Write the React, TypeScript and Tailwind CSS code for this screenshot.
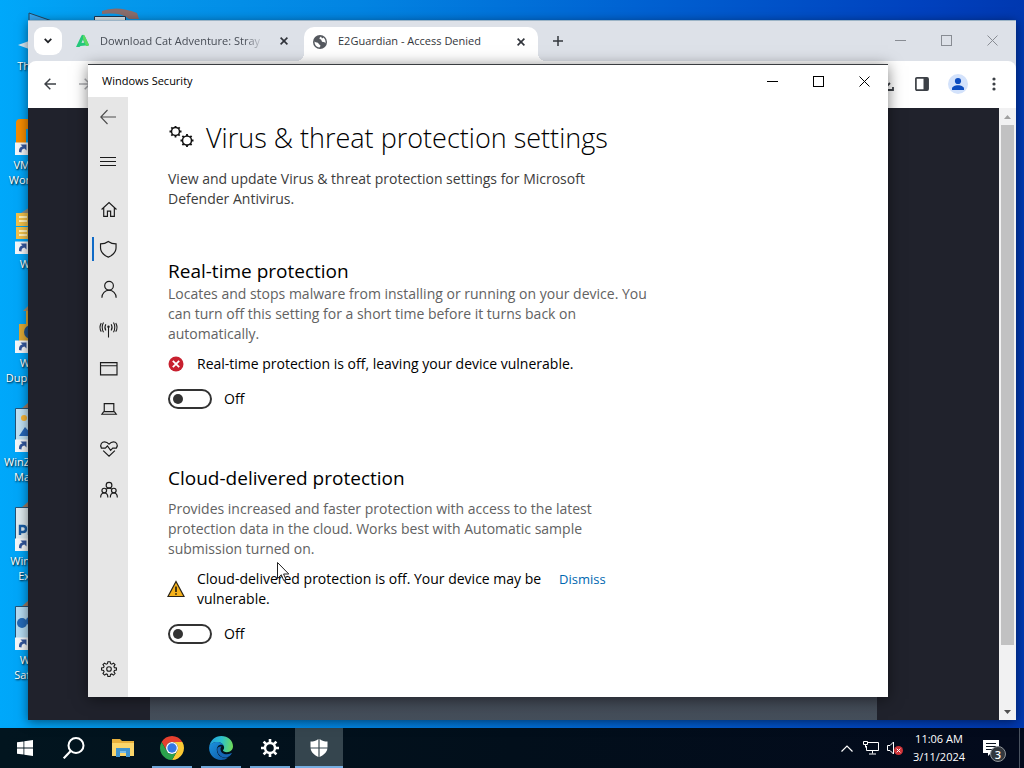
import React from "react";

type IconProps = { className?: string; children: React.ReactNode };

/* 16px line icon with crisp one-pixel strokes */
function Line({ className = "size-4", children }: IconProps) {
  return (
    <svg viewBox="0 0 16 16" className={className} fill="none" stroke="currentColor" strokeWidth="1.1" aria-hidden="true">
      {children}
    </svg>
  );
}

const GEAR =
  "M6.9 .7h2.2l.4 2 1.3.55 1.7-1.15 1.55 1.55-1.15 1.7.55 1.3 2 .4v2.1l-2 .4-.55 1.3 1.15 1.7-1.55 1.55-1.7-1.15-1.3.55-.4 2H6.9l-.4-2-1.3-.55-1.7 1.15L1.95 12.5l1.15-1.7-.55-1.3-2-.4V7l2-.4.55-1.3-1.15-1.7L3.5 2.1l1.7 1.15 1.3-.55z";

function WindowButtons({ tone }: { tone: string }) {
  return (
    <div className={`flex ${tone}`}>
      <button aria-label="Minimize" className="flex h-8 w-[46px] items-center justify-center pr-px">
        <svg viewBox="0 0 11 11" className="size-[11px]" shapeRendering="crispEdges" aria-hidden="true">
          <path d="M0 5.5h11" stroke="currentColor" />
        </svg>
      </button>
      <button aria-label="Maximize" className="flex h-8 w-[46px] items-center justify-center pr-px">
        <svg viewBox="0 0 11 11" className="size-[11px]" fill="none" shapeRendering="crispEdges" aria-hidden="true">
          <path d="M.5.5h10v10H.5z" stroke="currentColor" />
        </svg>
      </button>
      <button aria-label="Close" className="flex h-8 w-[46px] items-center justify-center pr-px">
        <svg viewBox="0 0 11 11" className="size-[11px]" aria-hidden="true">
          <path d="M.5.5l10 10M10.5.5l-10 10" stroke="currentColor" />
        </svg>
      </button>
    </div>
  );
}

/* ---------- Desktop shortcuts ---------- */

const shortcuts: { lines: string[]; art: React.ReactNode }[] = [
  {
    lines: ["Th"],
    art: (
      <>
        <path d="M14 1l26 9H14z" fill="#3aa6ee" stroke="#23455f" />
        <path d="M3 33l11-4v8z" fill="#d5e8f4" />
      </>
    ),
  },
  { lines: ["VM", "Wor"], art: <path d="M1 38V12q0-4 4-4h30v10H11v20z" fill="#f38b00" /> },
  {
    lines: ["W"],
    art: (
      <>
        <path d="M6 3l12-8v8z" fill="#8d8f86" />
        <path d="M1 3h30v13H1zM1 17h30v12H1z" fill="#f0c04a" />
        <path d="M4 7h8M4 11h8M4 21h8M4 25h8" stroke="#fff0b8" strokeWidth="2" />
      </>
    ),
  },
  {
    lines: ["W", "Dupl"],
    art: (
      <>
        <path d="M8 2l8-8v8z" fill="#a98a68" />
        <path d="M4 15h7V2h20v30H4z" fill="#dca733" />
        <circle cx="16" cy="23" r="7" fill="#245184" />
      </>
    ),
  },
  {
    lines: ["WinZ", "Ma"],
    art: (
      <>
        <path d="M6 1l8-7v7z" fill="#9b7b65" />
        <path d="M.5.5h30v42H.5z" fill="#bfe0f2" stroke="#245276" />
        <circle cx="9" cy="10" r="3" fill="#f5b436" />
        <path d="M4 28l6-9 8 9z" fill="#2567b8" />
      </>
    ),
  },
  {
    lines: ["Win", "Ex"],
    art: (
      <>
        <path d="M6 1l8-7v7z" fill="#9b7b65" />
        <path d="M.5.5h30v42H.5z" fill="#dde9ee" stroke="#245276" />
        <path d="M5 28V19h3q3 0 3 3t-3 3H5M14 28V18" fill="none" stroke="#185ba2" strokeWidth="2.4" />
      </>
    ),
  },
  {
    lines: ["W", "Saf"],
    art: (
      <>
        <path d="M6 1l8-7v7z" fill="#9b7b65" />
        <path d="M.5.5h30v42H.5z" fill="#b4daf0" stroke="#245276" />
        <circle cx="7" cy="17" r="5" fill="#2469b6" />
        <circle cx="15" cy="15" r="4" fill="#2469b6" />
      </>
    ),
  },
];

function Desktop() {
  return (
    <>
      <ul className="absolute top-3 left-0 w-[30px]">
        {shortcuts.map((s, i) => (
          <li key={i} className="flex h-[99px] flex-col">
            <svg viewBox="0 0 14 46" className="ml-[15px] h-[46px] w-[14px] shrink-0 overflow-visible" aria-hidden="true">
              {s.art}
              {i > 0 && (
                <>
                  <path d="M0 31.5h13V44H0z" fill="#f4f6f8" />
                  <path d="M4 41c0-4 1-5 3.5-5.5L5.500 33.500h6v6l-2-2C7 38 6.500 39 6.500 41.500z" fill="#33569c" />
                </>
              )}
            </svg>
            {s.lines.map((l) => (
              <span key={l} className="text-right text-[11px] leading-[15px] whitespace-nowrap text-white [text-shadow:1px_1px_2px_#000]">
                {l}
              </span>
            ))}
          </li>
        ))}
      </ul>
      <svg viewBox="0 0 50 14" className="absolute top-[7px] left-[93px] h-[14px] w-[50px]" aria-hidden="true">
        <path d="M9 4Q24-2 44 6l2 6H36q-8-7-27-5z" fill="#8a6d6c" />
        <path d="M1.5 9.500h31V14h-31z" fill="#d8e4ea" stroke="#1d3550" />
      </svg>
    </>
  );
}

/* ---------- Browser ---------- */

function TabClose({ label }: { label: string }) {
  return (
    <button aria-label={label} className="flex size-4 items-center justify-center">
      <svg viewBox="0 0 8 8" className="size-2" aria-hidden="true">
        <path d="M.6.6l6.8 6.8M7.4.6L.6 7.4" stroke="#30333a" strokeWidth="1.6" />
      </svg>
    </button>
  );
}

function Browser() {
  return (
    <section
      aria-label="Browser"
      className="absolute top-5 right-2 bottom-2 left-7 flex flex-col border-t border-[#9cb4c6] bg-[#dde1e8] shadow-[0_2px_10px_rgba(0,0,0,0.5)]"
    >
      <div className="flex h-10 shrink-0 pl-[6px]">
        <button aria-label="Search tabs" className="mt-[6px] flex size-7 items-center justify-center rounded-[9px] bg-white">
          <svg viewBox="0 0 8 6" className="h-[6px] w-2" fill="none" aria-hidden="true">
            <path d="M.7.9L4 4.200 7.300.9" stroke="#1f2125" strokeWidth="1.7" />
          </svg>
        </button>
        <div className="ml-[14px] flex h-10 w-[216px] items-center">
          <svg viewBox="0 0 14 14" className="size-[14px] shrink-0" aria-hidden="true">
            <path d="M0 13L5.5 1.500Q7 0 8.500 1.500L13 11q-2 2-4 0L7 5.500 5.500 9l3-.5 1 3-5 .5L3.500 13z" fill="#23c77a" />
            <path d="M7 1Q8 .8 8.800 2L13 11q-1 1.500-3 .8L7 5z" fill="#5ada62" />
          </svg>
          <span className="ml-[10px] w-[164px] shrink-0 text-[11px] whitespace-nowrap text-[#474c55] [mask-image:linear-gradient(to_right,#000_88%,transparent)]">
            Download Cat Adventure: Stray
          </span>
          <span className="ml-3 flex">
            <TabClose label="Close Download Cat Adventure" />
          </span>
        </div>
        <div className="relative mt-[6px] ml-3 flex h-[34px] w-[234px] items-center rounded-t-[10px] bg-white px-[9px] pb-[5px] before:absolute before:bottom-0 before:-left-2 before:size-2 before:bg-[radial-gradient(circle_at_0_0,transparent_8px,#fff_8px)] after:absolute after:-right-2 after:bottom-0 after:size-2 after:bg-[radial-gradient(circle_at_100%_0,transparent_8px,#fff_8px)]">
          <svg viewBox="0 0 14 14" className="size-[14px] shrink-0" aria-hidden="true">
            <circle cx="7" cy="7" r="7" fill="#54585e" />
            <path
              d="M1.5 6.500C3 8 5 7 5.500 8.500s2 1 2 2.500L6.500 12.600C3 12 1.500 9.500 1.500 6.500zM8 1.500q-2 1-1.500 2.500 2 0 2 1.500t2 1.500 2 1.500Q13 4.500 10.500 2.500L9 3.500z"
              fill="#fff"
            />
          </svg>
          <span className="ml-[11px] flex-1 text-[11px] whitespace-nowrap text-[#33363b]">E2Guardian - Access Denied</span>
          <TabClose label="Close E2Guardian" />
        </div>
        <button aria-label="New tab" className="ml-3 flex h-10 w-4 items-center justify-center text-[#33373d]">
          <svg viewBox="0 0 10 10" className="size-[10px]" aria-hidden="true">
            <path d="M5 0v10M0 5h10" stroke="currentColor" strokeWidth="1.5" />
          </svg>
        </button>
        <div className="ml-auto pt-[3px]">
          <WindowButtons tone="text-[#888c93]" />
        </div>
      </div>
      <div className="flex h-[47px] shrink-0 items-center rounded-t-lg bg-white px-2 pb-px text-[#3c4046]">
        <button aria-label="Back" className="flex size-7 items-center justify-center">
          <svg viewBox="0 0 12 12" className="size-3" fill="none" stroke="currentColor" strokeWidth="1.5" aria-hidden="true">
            <path d="M12 6H1M6.3.7L1 6l5.300 5.300" />
          </svg>
        </button>
        <button aria-label="Forward" className="ml-[7px] flex size-7 items-center justify-center text-[#a9abaf]">
          <svg viewBox="0 0 12 12" className="size-3" fill="none" stroke="currentColor" strokeWidth="1.5" aria-hidden="true">
            <path d="M0 6h11M5.7.7L11 6l-5.300 5.300" />
          </svg>
        </button>
        <div className="ml-auto flex gap-2">
          <button aria-label="Downloads" className="flex size-7 items-center justify-center">
            <svg viewBox="0 0 16 16" className="size-4" fill="none" stroke="currentColor" strokeWidth="1.8" aria-hidden="true">
              <path d="M8 2v9M4 7l4 4 4-4M4 11v3h11v-3" />
            </svg>
          </button>
          <button aria-label="Side panel" className="flex size-7 items-center justify-center">
            <svg viewBox="0 0 14 14" className="size-[14px]" aria-hidden="true">
              <rect x=".9" y=".9" width="12.2" height="12.2" rx="1" fill="none" stroke="currentColor" strokeWidth="1.7" />
              <path d="M8.5 1H13v12H8.500z" fill="currentColor" />
            </svg>
          </button>
          <button aria-label="Profile" className="flex size-7 items-center justify-center">
            <svg viewBox="0 0 20 20" className="size-5" aria-hidden="true">
              <circle cx="10" cy="10" r="10" fill="#d3e2fb" />
              <circle cx="10" cy="7" r="3.1" fill="#0d4dc0" />
              <path d="M4 16v-1.5c0-2 3-3.300 6-3.300s6 1.300 6 3.300V16z" fill="#0d4dc0" />
            </svg>
          </button>
          <button aria-label="Menu" className="flex size-7 items-center justify-center">
            <svg viewBox="0 0 4 14" className="h-[14px] w-1" fill="currentColor" aria-hidden="true">
              <circle cx="2" cy="2" r="1.6" />
              <circle cx="2" cy="7" r="1.6" />
              <circle cx="2" cy="12" r="1.6" />
            </svg>
          </button>
        </div>
      </div>
      <div className="flex min-h-0 flex-1">
        <div className="flex flex-1 items-end bg-[#20222c] px-[122px]">
          <div className="h-14 w-full bg-gradient-to-b from-[#3b3c48] to-[#454f5b]" />
        </div>
        <div className="flex w-[17px] flex-col items-center bg-[#f1f1f2]">
          <button aria-label="Scroll up" className="flex h-[17px] items-center">
            <svg viewBox="0 0 7 4" className="h-1 w-[7px]" aria-hidden="true">
              <path d="M0 4L3.5 0 7 4z" fill="#a0a0a0" />
            </svg>
          </button>
          <div className="w-[13px] flex-[520_1_0%] bg-[#c1c1c2]" />
          <div className="flex-[58_1_0%]" />
          <button aria-label="Scroll down" className="flex h-[17px] items-center">
            <svg viewBox="0 0 7 4" className="h-1 w-[7px]" aria-hidden="true">
              <path d="M0 0h7L3.5 4z" fill="#4f4f50" />
            </svg>
          </button>
        </div>
      </div>
    </section>
  );
}

/* ---------- Windows Security ---------- */

const navItems: { label: string; icon: React.ReactNode }[] = [
  { label: "Home", icon: <path d="M1.5 8L8.500 1.500 15.500 8M3.500 6.500v8h3.500V9.500h3v5h3.500v-8" /> },
  {
    label: "Virus & threat protection",
    icon: <path d="M7.8.4C9.800 1.900 12.300 2.700 15.100 2.700v4c0 4-3.300 6.800-7.300 8.500C3.800 13.500.5 10.700.5 6.700V2.700C3.300 2.700 5.800 1.900 7.800.4z" />,
  },
  {
    label: "Account protection",
    icon: (
      <>
        <circle cx="8.5" cy="4.5" r="4.1" />
        <path d="M1.8 15.700C1.800 11.500 4.800 8.700 8.500 8.700s6.700 2.800 6.700 7" />
      </>
    ),
  },
  {
    label: "Firewall & network protection",
    icon: (
      <>
        <path
          strokeWidth="1"
          d="M8 6V15.500M5.500 9q-1.800-3 0-6M10.500 9q1.800-3 0-6M3.300 10.500q-2.500-4.500 0-9M12.700 10.500q2.500-4.500 0-9M1.200 10q-2.500-4 0-8M14.800 10q2.500-4 0-8"
        />
        <circle cx="8" cy="5.500" r=".6" />
      </>
    ),
  },
  { label: "App & browser control", icon: <path d="M.5 1.500h15.500v11.500H.5zM.5 4.500H16" /> },
  { label: "Device security", icon: <path d="M4 2.500h9v7.500H4zM3.500 10L1.800 12.500h13.500L13.500 10" /> },
  {
    label: "Device performance & health",
    icon: (
      <path d="M1.3 6.500C-.5 3 2 .8 4.300.8 6.500.8 7.500 1.800 8.500 3 9.500 1.800 10.500.8 12.700.8 15 .8 17.500 3 15.500 6.500M3 9l5.500 5.300L14 9M.8 6.700h4.200l2-2 3 4.100 2-2.100h3.800" />
    ),
  },
  {
    label: "Family options",
    icon: (
      <>
        <circle cx="8.5" cy="4" r="2.700" />
        <circle cx="4" cy="9" r="2.200" />
        <circle cx="13" cy="9" r="2.200" />
        <path d="M.6 15.500c0-2.500 1.300-4.200 3.400-4.200s3.400 1.700 3.400 4.200M9.700 15.500c0-2.500 1.300-4.200 3.300-4.200s3.300 1.700 3.300 4.200M6 7.500q2.500-1.500 5 0" />
      </>
    ),
  },
];

function Toggle({ label }: { label: string }) {
  return (
    <label className="mt-[15px] flex h-5 w-max items-center gap-3 text-sm leading-5 text-black">
      <input
        type="checkbox"
        role="switch"
        aria-label={label}
        className="flex h-5 w-11 appearance-none items-center rounded-full border-2 border-[#333] bg-white pl-[3px] before:size-[10px] before:rounded-full before:bg-[#333] before:content-['']"
      />
      Off
    </label>
  );
}

function SecurityWindow() {
  return (
    <section
      aria-label="Windows Security"
      className="absolute top-16 right-[136px] bottom-[31px] left-[88px] flex flex-col border-t border-[#3a3d41] bg-white shadow-[0_2px_14px_rgba(0,0,0,0.5)]"
    >
      <header className="flex h-8 shrink-0 items-center justify-between pl-[14px] text-black">
        <span className="pt-px text-[11px]">Windows Security</span>
        <WindowButtons tone="text-black" />
      </header>
      <div className="flex min-h-0 flex-1">
        <nav className="flex w-10 shrink-0 flex-col bg-[#e6e6e6] text-[#1b1b1b]">
          <button aria-label="Back" className="flex size-10 items-center justify-center text-[#4c4c4c]">
            <Line>
              <path d="M16 8H.8M7.5 1L.8 8l6.700 7" />
            </Line>
          </button>
          <button aria-label="Open navigation" className="mt-1 mb-2 flex size-10 items-center justify-center">
            <Line>
              <path d="M0 4.500h16M0 8.500h16M0 12.500h16" shapeRendering="crispEdges" />
            </Line>
          </button>
          {navItems.map((n, i) => (
            <button key={n.label} aria-label={n.label} className="flex h-10 w-full items-center">
              <span className={i === 1 ? "ml-1 h-6 w-[2px] bg-[#0f6ac6]" : "ml-1 h-6 w-[2px]"} />
              <Line className="ml-[6px] size-[17px] overflow-visible">{n.icon}</Line>
            </button>
          ))}
          <button aria-label="Settings" className="mt-auto mb-2 flex size-10 items-center justify-center pl-[2px]">
            <Line>
              <path d={GEAR} />
              <circle cx="8" cy="8" r="2.3" />
            </Line>
          </button>
        </nav>
        <main className="min-w-0 flex-1 overflow-hidden pt-[21px] pl-10 text-sm leading-5">
          <h1 className="flex h-10 items-center text-[27px] font-light text-black">
            <svg viewBox="0 0 26 24" className="mr-3 h-6 w-[26px]" fill="none" stroke="#111" strokeWidth="1.5" aria-hidden="true">
              <circle cx="7.5" cy="5.500" r="4" />
              <circle cx="19" cy="14.5" r="4.500" />
              <path
                strokeWidth="1.8"
                d="M7.5 1.500v-2M7.500 11.500v-2M3.500 5.500h-2M13.500 5.500h-2M4.700 2.700L3.300 1.300M11.700 9.700l-1.400-1.400M4.700 8.300l-1.400 1.400M11.700 1.300l-1.400 1.400M19 10V8M19 21v-2M14.500 14.500h-2M25.500 14.500h-2M15.800 11.300l-1.400-1.400M23.600 19.100l-1.400-1.400M15.800 17.700l-1.400 1.400M23.600 9.900l-1.400 1.400"
              />
            </svg>
            Virus &amp; threat protection settings
          </h1>
          <p className="mt-[11px] max-w-[460px] text-[#3c3c3c]">
            View and update Virus &amp; threat protection settings for Microsoft Defender Antivirus.
          </p>

          <section className="mt-[49px] max-w-[492px]">
            <h2 className="text-[19px] leading-[26px] text-black">Real-time protection</h2>
            <p className="text-[#626262]">
              Locates and stops malware from installing or running on your device. You can turn off this setting for a short time before it turns back on automatically.
            </p>
            <div className="mt-[10px] flex items-center text-black">
              <svg viewBox="0 0 16 16" className="mr-[13px] size-4" aria-hidden="true">
                <circle cx="8" cy="8" r="7.5" fill="#c8202f" />
                <path d="M4.8 4.800l6.400 6.400M11.200 4.800l-6.400 6.400" stroke="#fff" strokeWidth="1.8" />
              </svg>
              Real-time protection is off, leaving your device vulnerable.
            </div>
            <Toggle label="Real-time protection" />
          </section>

          <section className="mt-14 max-w-[492px]">
            <h2 className="text-[19px] leading-[26px] text-black">Cloud-delivered protection</h2>
            <p className="mt-2 max-w-[440px] text-[#626262]">
              Provides increased and faster protection with access to the latest protection data in the cloud. Works best with Automatic sample submission turned on.
            </p>
            <div className="mt-[10px] flex items-center text-black">
              <svg viewBox="0 0 16 16" className="mr-[13px] size-4 shrink-0 overflow-visible" aria-hidden="true">
                <path d="M8 .5L16 15.500H0z" fill="#f6b21b" stroke="#2b2418" strokeWidth="1.2" />
                <path d="M8 5.500v5.500M8 12.300v1.500" stroke="#111" strokeWidth="1.5" />
              </svg>
              <p className="w-[362px]">Cloud-delivered protection is off. Your device may be vulnerable.</p>
              <a href="#dismiss" className="self-start text-[13px] text-[#0067b0]">
                Dismiss
              </a>
            </div>
            <Toggle label="Cloud-delivered protection" />
          </section>
        </main>
      </div>
    </section>
  );
}

/* ---------- Taskbar ---------- */

const CHROME_ARM = "M12 6H22.39A12 12 0 0 0 1.61 6L6.8 15A6 6 0 0 1 12 6Z";

const apps: { label: string; state: "idle" | "running" | "active"; icon: React.ReactNode }[] = [
  {
    label: "Start",
    state: "idle",
    icon: (
      <svg viewBox="0 0 16 16" className="size-4" fill="#fff" aria-hidden="true">
        <path d="M0 2.300l6.500-.9v6.100H0zM7.300 1.300L16 0v7.500H7.300zM0 8.400h6.500v6.200L0 13.700zM7.300 8.400H16V16l-8.700-1.300z" />
      </svg>
    ),
  },
  {
    label: "Search",
    state: "idle",
    icon: (
      <svg viewBox="0 0 22 22" className="size-[22px]" fill="none" stroke="#fff" strokeWidth="2" aria-hidden="true">
        <circle cx="13" cy="8.5" r="7.500" />
        <path d="M7.7 14L.7 21.300" strokeWidth="2.2" />
      </svg>
    ),
  },
  {
    label: "File Explorer",
    state: "idle",
    icon: (
      <svg viewBox="0 0 22 18" className="h-[18px] w-[22px]" aria-hidden="true">
        <path d="M0 0h8l2 2h12v15H0z" fill="#e8b13d" />
        <path d="M0 4h22v13H0z" fill="#fbd66b" />
        <path d="M4 9h14v9h-4v-4H8v4H4z" fill="#3f93cf" />
        <path d="M8 12h6v2H8z" fill="#79bce6" />
      </svg>
    ),
  },
  {
    label: "Google Chrome",
    state: "running",
    icon: (
      <svg viewBox="0 0 24 24" className="size-6" aria-hidden="true">
        <path d={CHROME_ARM} fill="#e5402f" />
        <path d={CHROME_ARM} fill="#fcc934" transform="rotate(120 12 12)" />
        <path d={CHROME_ARM} fill="#2ba14c" transform="rotate(240 12 12)" />
        <circle cx="12" cy="12" r="6" fill="#fff" />
        <circle cx="12" cy="12" r="4.7" fill="#3478e5" />
      </svg>
    ),
  },
  {
    label: "Microsoft Edge",
    state: "running",
    icon: (
      <svg viewBox="0 0 24 24" className="size-6" aria-hidden="true">
        <defs>
          <linearGradient id="edgeTop" x1="0" y1=".4" x2="1" y2=".5">
            <stop offset="0" stopColor="#239fe0" />
            <stop offset=".5" stopColor="#2cc0cc" />
            <stop offset="1" stopColor="#6fdb58" />
          </linearGradient>
          <linearGradient id="edgeLow" x1="0" y1="0" x2="1" y2="1">
            <stop offset="0" stopColor="#1b93df" />
            <stop offset="1" stopColor="#0e55a3" />
          </linearGradient>
        </defs>
        <path
          d="M.2 11C1 4.500 6 0 12.300 0 19 0 24 4.700 24 10.300c0 3.700-2.800 5.900-6.100 5.900-2.500 0-3.900-.9-3.900-1.600 0-.6 1.100-1 1.100-3C15.100 8.500 12 6 8.500 6 4.500 6 1.200 8.300.2 11z"
          fill="url(#edgeTop)"
        />
        <path
          d="M.1 12C.1 8.500 4 6 8.300 6c3.500 0 6.200 2 6.700 4.500-.8-1.300-2-1.700-3-1.700-2.500 0-4.200 2.200-4.200 5 0 4.800 4 8.200 8.700 8.200 1 0 1.800-.2 2.700-.5C17.300 23.200 14.800 24 12 24 5.400 24 .1 18.800.1 12z"
          fill="url(#edgeLow)"
        />
        <path
          d="M8.300 12.500c-.8 4.500 3 9.200 8.700 9.200 2.500-.4 4.500-2 5.700-4.100.2-.5-.3-.7-.7-.4-4.500 2.200-10.500.8-10.500-4.200 0-1.500 1-2.500 1-2.500-2 0-3.800.6-4.200 2z"
          fill="#1565b5"
        />
      </svg>
    ),
  },
  {
    label: "Settings",
    state: "running",
    icon: (
      <svg viewBox="0 0 18 18" className="size-[18px]" fill="none" stroke="#fff" aria-hidden="true">
        <circle cx="9" cy="9" r="5" strokeWidth="2.4" />
        <path
          d="M9 0v3.500M9 14.500v3.500M0 9h3.500M14.500 9h3.500M2.600 2.600l2.400 2.400M13 13l2.400 2.400M2.600 15.400l2.400-2.400M13 5l2.400-2.400"
          strokeWidth="2.600"
        />
      </svg>
    ),
  },
  {
    label: "Windows Security",
    state: "active",
    icon: (
      <svg viewBox="0 0 18 18" className="size-[18px]" fill="#fff" aria-hidden="true">
        <path d="M8.4 0v8.400H.5V2.500C3.500 2.500 6 2 8.400 0zM9.600 0v8.400h7.900V2.500C14.500 2.500 12 2 9.600 0zM.6 9.600h7.800V18C4.500 16.200 1.200 13.500.6 9.600zM17.400 9.600H9.600V18c3.900-1.800 7.200-4.500 7.800-8.400z" />
      </svg>
    ),
  },
];

function Taskbar() {
  return (
    <footer className="flex h-10 shrink-0 items-stretch bg-gradient-to-r from-[#02151f] via-[#020f1b] to-[#030a1c] text-white">
      <div className="flex gap-px pl-px">
        {apps.map((a) => (
          <button
            key={a.label}
            aria-label={a.label}
            className={a.state === "active" ? "flex w-12 flex-col items-center bg-[#35454e]" : "flex w-12 flex-col items-center"}
          >
            <span className="flex h-[38px] items-center pt-[2px]">{a.icon}</span>
            {a.state === "running" && <span className="h-[2px] w-10 bg-[#6fa6d8]" />}
            {a.state === "active" && <span className="h-[2px] w-full bg-[#76aee2]" />}
          </button>
        ))}
      </div>
      <div className="ml-auto flex items-center">
        <button aria-label="Show hidden icons" className="flex w-6 justify-center">
          <svg viewBox="0 0 12 7" className="h-[7px] w-3" fill="none" stroke="#fff" strokeWidth="1.2" aria-hidden="true">
            <path d="M.5 6.500L6 1l5.500 5.500" />
          </svg>
        </button>
        <button aria-label="Network" className="flex w-6 justify-center">
          <svg viewBox="0 0 16 14" className="h-[14px] w-4" fill="none" stroke="#fff" aria-hidden="true">
            <path d="M4.5 1.500h11v8h-12V5M9.500 9.500v3M6 13h7M.5.5h4v3h-4zM2.500 3.500v3" />
          </svg>
        </button>
        <button aria-label="Volume muted" className="flex w-6 justify-center">
          <svg viewBox="0 0 16 14" className="h-[14px] w-4" fill="none" aria-hidden="true">
            <path d="M.5 4.500H3L6.500 1v12L3 9.500H.5z" stroke="#fff" />
            <circle cx="11.5" cy="9.500" r="4.500" fill="#cf3338" />
            <path d="M9.7 7.700l3.600 3.600M13.300 7.700l-3.600 3.600" stroke="#fff" />
          </svg>
        </button>
        <button className="flex w-16 flex-col items-center text-[11px] leading-[18px] whitespace-nowrap">
          <span>11:06 AM</span>
          <span>3/11/2024</span>
        </button>
        <button aria-label="3 notifications" className="flex w-12 justify-center pr-2">
          <span className="relative">
            <svg viewBox="0 0 16 16" className="size-4" aria-hidden="true">
              <path d="M0 0h16v13h-8l-3 3v-3H0z" fill="#fff" />
              <path d="M3 3.500h10M3 6.500h10M3 9.500h7" stroke="#0b1420" />
            </svg>
            <span className="absolute top-[6px] left-[7px] flex size-4 items-center justify-center rounded-full border border-[#8f9499] bg-[#33383e] text-[11px] leading-none font-semibold">
              3
            </span>
          </span>
        </button>
        <span className="mr-1 h-10 w-px bg-[#4a5360]" />
      </div>
    </footer>
  );
}

export default function App() {
  return (
    <div className="flex h-screen flex-col overflow-hidden bg-[#0078d7] font-['Open_Sans','Noto_Sans',sans-serif]">
      <div className="relative min-h-0 flex-1 bg-[linear-gradient(to_right,#00a8fa_0%,#0498ec_12%,#0284e2_35%,#0062d2_62%,#0041be_90%,#0038b0_100%)]">
        <Desktop />
        <Browser />
        <SecurityWindow />
        <svg viewBox="0 0 13 20" className="pointer-events-none absolute top-[562px] left-[277px] h-5 w-[13px]" aria-hidden="true">
          <path d="M.5.5v16l3.800-3.700 2.400 5.700 2.300-1-2.400-5.500h5.200z" fill="#fff" stroke="#222" />
        </svg>
      </div>
      <Taskbar />
    </div>
  );
}
